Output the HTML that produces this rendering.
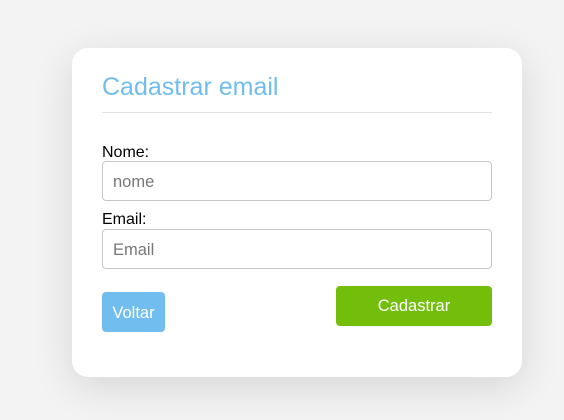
<!DOCTYPE html><html><head><style>
body{margin:0;width:564px;height:420px;background:#f3f3f3;font-family:"Liberation Sans",Arial,sans-serif;overflow:hidden;position:relative}
.card{position:absolute;left:72px;top:48px;width:450px;height:329px;background:#fff;border-radius:16px;box-shadow:0 10px 40px rgba(0,0,0,0.12)}
.t{position:absolute;left:30px;top:25px;font-size:25px;color:#6fbdee}
.hr{position:absolute;left:30px;top:64px;width:390px;height:1px;background:#e2e2e2}
.l{position:absolute;left:30px;font-size:16px;color:#000}
.in{position:absolute;left:30px;height:38px;border:1px solid #c6c6c6;border-radius:4px;font-size:16.5px;color:#777;line-height:40px;padding-left:10px;width:378px}
.b{position:absolute;color:#fff;font-size:16.5px;border-radius:4px;text-align:center}
</style></head><body><div class="card">
<div class="t">Cadastrar email</div><div class="hr"></div>
<div class="l" style="top:96px">Nome:</div>
<div class="in" style="top:113px">nome</div>
<div class="l" style="top:163px">Email:</div>
<div class="in" style="top:181px">Email</div>
<div class="b" style="left:30px;top:244px;width:63px;height:40px;line-height:42px;background:#71bdef">Voltar</div>
<div class="b" style="left:264px;top:238px;width:156px;height:40px;line-height:40px;background:#72be0b">Cadastrar</div>
</div></body></html>
